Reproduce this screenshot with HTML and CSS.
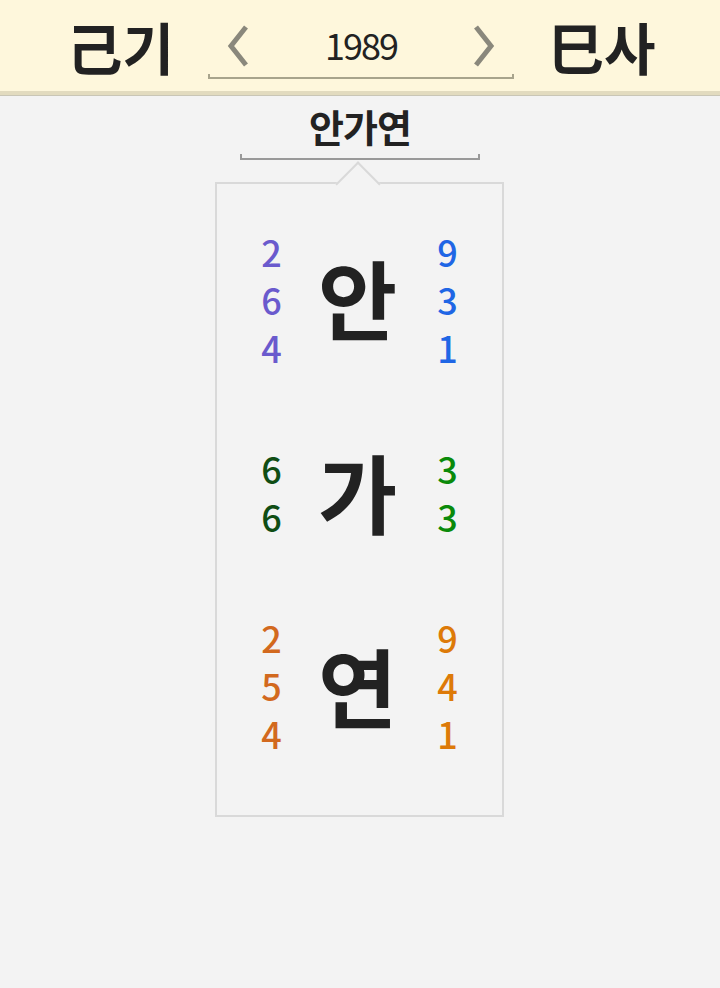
FILE: index.html
```html
<!DOCTYPE html>
<html lang="ko">
<head>
<meta charset="utf-8">
<link rel="stylesheet" href="styles.css">
</head>
<body>
<header class="top">
  <div class="gz">己기</div>
  <div class="nav">
    <div class="nav-row">
      <svg class="chev" viewBox="0 0 24 44" width="24" height="44"><polyline points="20,3 5,22 20,41" fill="none" stroke="#8a887c" stroke-width="5"/></svg>
      <span class="year">1989</span>
      <svg class="chev" viewBox="0 0 24 44" width="24" height="44"><polyline points="4,3 19,22 4,41" fill="none" stroke="#8a887c" stroke-width="5"/></svg>
    </div>
    <div class="nav-line"></div>
  </div>
  <div class="gz">巳사</div>
</header>
<main class="main">
  <div class="name">안가연</div>
  <div class="name-line"></div>
  <div class="card">
    <div class="notch"></div>
    <div class="row r1">
      <div class="nums purple"><span>2</span><span>6</span><span>4</span></div>
      <div class="ch">안</div>
      <div class="nums right blue"><span>9</span><span>3</span><span>1</span></div>
    </div>
    <div class="row r2">
      <div class="nums dgreen"><span>6</span><span>6</span></div>
      <div class="ch">가</div>
      <div class="nums right green"><span>3</span><span>3</span></div>
    </div>
    <div class="row r3">
      <div class="nums orange"><span>2</span><span>5</span><span>4</span></div>
      <div class="ch">연</div>
      <div class="nums right orange2"><span>9</span><span>4</span><span>1</span></div>
    </div>
  </div>
</main>
</body>
</html>
```
FILE: styles.css
```css
* { box-sizing: border-box; }
html, body { margin: 0; padding: 0; }
body {
  background: #f3f3f3;
  font-family: "Noto Sans CJK KR", "Noto Sans", sans-serif;
  color: #222;
  width: 720px;
  height: 988px;
  overflow: hidden;
}
.top {
  height: 95px;
  background: #fef7dc;
  border-bottom: 4px solid #e2dbbf;
  box-shadow: 0 1px 0 #c9c6b6;
  display: flex;
  justify-content: center;
  align-items: flex-start;
  gap: 34px;
  padding-left: 2px;
}
.gz {
  font-size: 56px;
  font-weight: 700;
  line-height: 1;
  padding-top: 18px;
  letter-spacing: 0;
  color: #222;
}
.nav {
  width: 306px;
  padding-top: 24px;
}
.nav-row {
  display: flex;
  justify-content: space-between;
  align-items: center;
  padding: 0 18px 0 18px;
  height: 44px;
}
.year {
  font-family: "Noto Sans CJK KR", sans-serif;
  font-size: 36px;
  line-height: 1;
  font-weight: 400;
  letter-spacing: -2px;
  color: #222;
  position: relative;
  top: -2px;
}
.nav-line {
  margin-top: 6px;
  height: 5px;
  border: 2px solid #a8a48c;
  border-top: none;
}
.main {
  display: flex;
  flex-direction: column;
  align-items: center;
  padding-top: 4px;
}
.name {
  font-size: 38px;
  font-weight: 700;
  line-height: 1;
  padding-top: 8px;
  letter-spacing: -1px;
  color: #222;
}
.name-line {
  width: 240px;
  height: 6px;
  margin-top: 9px;
  border: 2px solid #999;
  border-top: none;
}
.card {
  position: relative;
  margin-top: 22px;
  width: 289px;
  height: 635px;
  border: 2px solid #d9d9d9;
  background: #f3f3f3;
  padding-top: 18px;
  margin-right: 2px;
}
.notch {
  position: absolute;
  top: -16px;
  left: 50%;
  width: 32px;
  height: 32px;
  margin-left: -17px;
  background: #f3f3f3;
  border-left: 2px solid #d9d9d9;
  border-top: 2px solid #d9d9d9;
  transform: rotate(45deg);
}
.row {
  display: grid;
  grid-template-columns: 110px 62px 1fr;
  align-items: center;
  height: 193px;
}
.nums {
  display: flex;
  flex-direction: column;
  align-items: center;
  font-family: "Noto Sans CJK KR", sans-serif;
  font-size: 36px;
  line-height: 48px;
  font-weight: 500;
}
.nums.right { padding-left: 5px; }
.ch {
  font-size: 86px;
  font-weight: 700;
  line-height: 1;
  display: flex;
  justify-content: center;
  color: #222;
}
.r1 .ch { padding-bottom: 4px; }
.r2 .ch { padding-bottom: 2px; }
.purple { color: #6a5acd; }
.blue { color: #1f66e5; }
.dgreen { color: #0f4d14; }
.green { color: #0a8a0a; }
.orange { color: #d2691e; }
.orange2 { color: #dd7a08; }
```
